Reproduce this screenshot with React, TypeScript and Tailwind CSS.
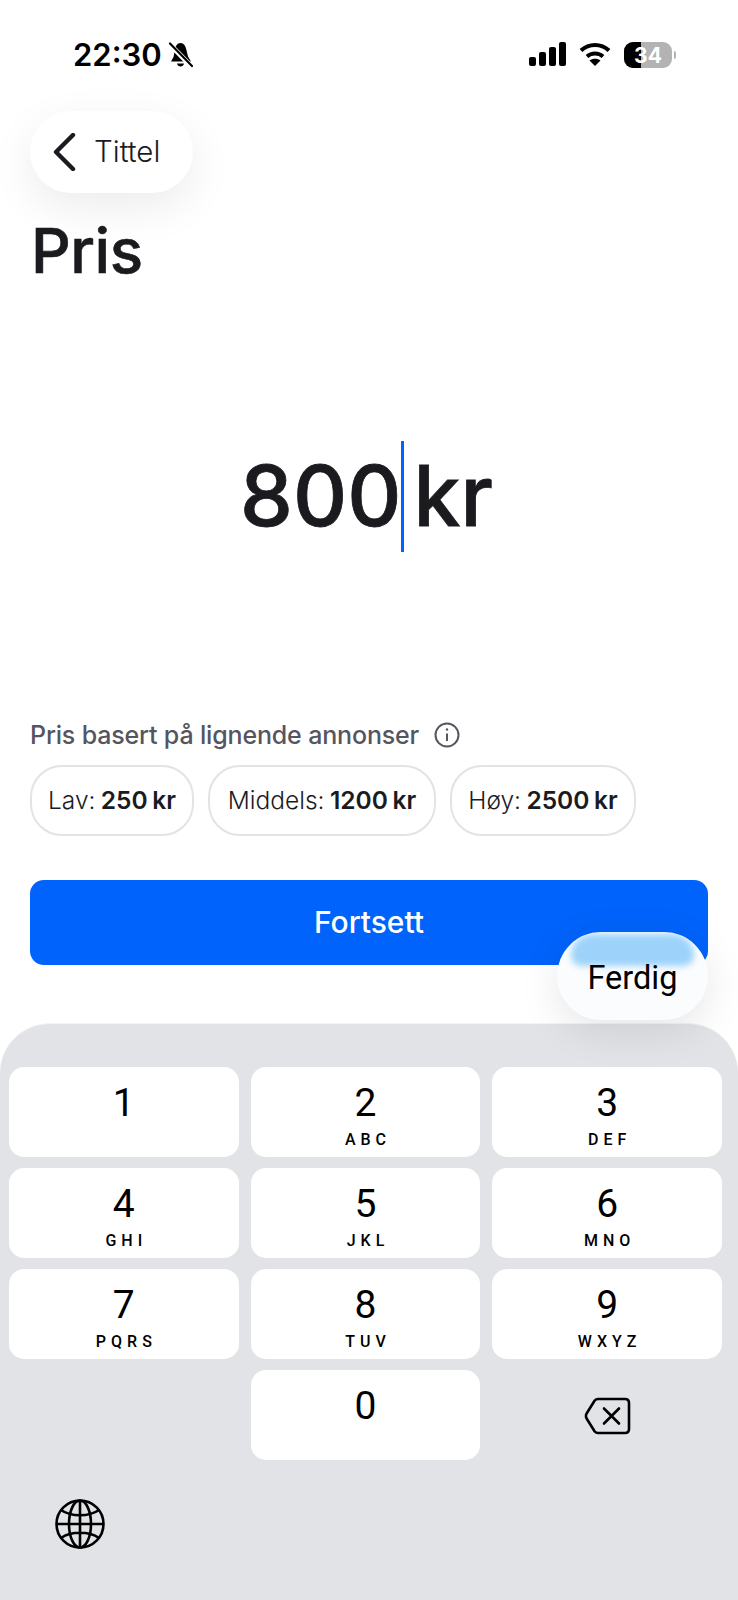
const rows = [
  [["1", ""], ["2", "ABC"], ["3", "DEF"]],
  [["4", "GHI"], ["5", "JKL"], ["6", "MNO"]],
  [["7", "PQRS"], ["8", "TUV"], ["9", "WXYZ"]],
];

function Key({ digit, letters }: { digit: string; letters: string }) {
  return (
    <div className="h-[90px] rounded-[15px] bg-white flex flex-col items-center pt-[13px] text-black">
      <span className="text-[39px] leading-[46px] font-normal">{digit}</span>
      <span className="text-[16px] leading-[18px] font-medium tracking-[5px] mt-[5px] pl-[5px]">{letters}</span>
    </div>
  );
}

function SignalIcon() {
  return (
    <svg width="37" height="24" viewBox="0 0 37 24" fill="#000">
      <rect x="0" y="15" width="7" height="9" rx="2" />
      <rect x="10" y="10" width="7" height="14" rx="2" />
      <rect x="20" y="5" width="7" height="19" rx="2" />
      <rect x="30" y="0" width="7" height="24" rx="2" />
    </svg>
  );
}

function WifiIcon() {
  return (
    <svg width="32" height="24" viewBox="0 0 32 24" fill="none" stroke="#000" strokeWidth="4">
      <path d="M2 8.5C10 1 22 1 30 8.5" />
      <path d="M8 14.5C12.5 10.5 19.5 10.5 24 14.5" />
      <path d="M16 24L10.5 18.5C13.5 16 18.5 16 21.5 18.5Z" fill="#000" stroke="none" />
    </svg>
  );
}

function BellOffIcon() {
  return (
    <svg width="25" height="27" viewBox="0 0 25 27">
      <path d="M12.5 1C16 1 17.5 4 18.3 7.5L20 14.5L23 19.5H3L5.5 15L7 7.5C7.6 4 9 1 12.5 1Z" fill="#000" />
      <path d="M9 21.5H16C15.6 25.5 9.4 25.5 9 21.5Z" fill="#000" />
      <path d="M1 1.5L24 25" stroke="#fff" strokeWidth="5" />
      <path d="M2 1.5L24 24" stroke="#000" strokeWidth="2.2" strokeLinecap="round" />
    </svg>
  );
}

function GlobeIcon() {
  return (
    <svg width="50" height="50" viewBox="0 0 50 50" fill="none" stroke="#000" strokeWidth="2.6">
      <circle cx="25" cy="25" r="23.5" />
      <ellipse cx="25" cy="25" rx="11" ry="23.5" />
      <path d="M25 1.5V48.5M1.5 25H48.5M6 11C16 18 34 18 44 11M6 39C16 32 34 32 44 39" />
    </svg>
  );
}

function BackspaceIcon() {
  return (
    <svg width="47" height="38" viewBox="0 0 47 38" fill="none" stroke="#000" strokeWidth="2.6" strokeLinecap="round" strokeLinejoin="round">
      <path d="M14 2H41C43.5 2 45 3.5 45 6V32C45 34.5 43.5 36 41 36H14C12.6 36 11.6 35.5 10.7 34.5L2.6 21.5C1.8 20 1.8 18 2.6 16.5L10.7 3.5C11.6 2.5 12.6 2 14 2Z" />
      <path d="M20 11.5L35 26.5M35 11.5L20 26.5" />
    </svg>
  );
}

export default function App() {
  return (
    <div className="relative w-[738px] h-[1600px] bg-white overflow-hidden font-['Inter',sans-serif] text-[#1b1b1f] flex flex-col">
      {/* status bar */}
      <div className="h-[111px] shrink-0 flex justify-between pt-[37px] pl-[73px] pr-[62px]">
        <div className="flex items-start gap-[6px] h-[36px]">
          <span className="text-[31px] leading-[36px] font-semibold text-black">22:30</span>
          <span className="mt-[5px]"><BellOffIcon /></span>
        </div>
        <div className="flex items-start gap-[13px] pt-[5px]">
          <SignalIcon />
          <WifiIcon />
          <div className="flex items-center gap-[2px]">
            <div className="relative w-[48px] h-[26px] rounded-[9px] bg-[#b3b3b3] overflow-hidden flex items-center justify-center">
              <div className="absolute left-0 top-0 bottom-0 w-[17px] bg-black" />
              <span className="relative text-[21px] leading-none font-bold text-white">34</span>
            </div>
            <div className="w-[2px] h-[8px] rounded-r-full bg-[#b3b3b3]" />
          </div>
        </div>
      </div>

      <div className="pl-[30px]">
        <div className="w-[163px] h-[82px] rounded-[41px] bg-white shadow-[0_14px_44px_rgba(0,0,0,0.08)] flex items-center pl-[22px] gap-[16px]">
          <svg width="26" height="38" viewBox="0 0 26 38" fill="none" stroke="#1b1b1f" strokeWidth="4.4" strokeLinecap="round" strokeLinejoin="round">
            <path d="M21 2L4 19L21 36" />
          </svg>
          <span className="text-[29.5px] leading-none font-light">Tittel</span>
        </div>
      </div>

      <h1 className="pl-[31px] mt-[20px] text-[62px] leading-[76px] font-medium tracking-[-0.5px] [-webkit-text-stroke:0.6px_#1b1b1f]">Pris</h1>

      {/* amount */}
      <div className="mt-[151px] h-[112px] flex items-center justify-center pr-[5px]">
        <span className="text-[84px] leading-none font-medium [-webkit-text-stroke:0.8px_#1b1b1f]">800</span>
        <div className="w-[3px] h-[111px] bg-[#0063fb] mr-[9px] shrink-0" />
        <span className="text-[84px] leading-none font-medium [-webkit-text-stroke:0.8px_#1b1b1f]">kr</span>
      </div>

      <div className="mt-[167px] pl-[30px] flex items-center gap-[15px] h-[32px] text-[#55555f]">
        <span className="text-[25px] leading-[32px] font-medium tracking-[-0.16px]">Pris basert på lignende annonser</span>
        <svg width="26" height="26" viewBox="0 0 26 26" fill="none" stroke="#55555f" strokeWidth="2">
          <circle cx="13" cy="13" r="11.5" />
          <path d="M13 11.5V19" />
          <circle cx="13" cy="7.5" r="1.2" fill="#55555f" stroke="none" />
        </svg>
      </div>

      <div className="mt-[14px] ml-[30px] flex gap-[14px] text-[24.5px] leading-none text-[#1b1b1f] [word-spacing:-1.5px]">
        <div className="h-[71px] w-[164px] rounded-[32px] border-2 border-[#e3e3e6] flex items-center justify-center font-light whitespace-nowrap">
          <span>Lav: <b className="font-semibold">250 kr</b></span>
        </div>
        <div className="h-[71px] w-[228px] rounded-[32px] border-2 border-[#e3e3e6] flex items-center justify-center font-light whitespace-nowrap">
          <span>Middels: <b className="font-semibold">1200 kr</b></span>
        </div>
        <div className="h-[71px] w-[186px] rounded-[32px] border-2 border-[#e3e3e6] flex items-center justify-center font-light whitespace-nowrap">
          <span>Høy: <b className="font-semibold">2500 kr</b></span>
        </div>
      </div>

      <div className="mt-[44px] mx-[30px] h-[85px] rounded-[14px] bg-[#0063fb] flex items-center justify-center text-white text-[30px] font-medium">
        Fortsett
      </div>

      {/* keyboard */}
      <div className="mt-[58px] flex-1 rounded-t-[50px] bg-[#e1e3e6] border-t border-[#f4f4f6] pl-[9px] pr-[16px] pt-[43px] font-['Roboto',sans-serif] flex flex-col gap-[11px]">
        {rows.map((row, i) => (
          <div key={i} className="grid grid-cols-3 gap-[12px]">
            {row.map(([d, l]) => <Key key={d} digit={d} letters={l} />)}
          </div>
        ))}
        <div className="grid grid-cols-3 gap-[12px]">
          <div />
          <Key digit="0" letters="" />
          <div className="flex items-center justify-center pt-[2px]">
            <BackspaceIcon />
          </div>
        </div>
        <div className="pl-[46px] pt-[28px]">
          <GlobeIcon />
        </div>
      </div>

      {/* Ferdig pill over the button */}
      <div className="absolute left-[557px] top-[932px] w-[151px] h-[88px] rounded-[44px] bg-[#fbfcfd] shadow-[0_10px_40px_rgba(0,0,0,0.1)] overflow-hidden flex items-end justify-center pb-[24px]">
        <div className="absolute left-[14px] right-[14px] top-[2px] h-[32px] rounded-b-[14px] rounded-t-[30px] bg-[#9dd3fb] blur-[3px]" />
        <span className="relative text-[32.5px] leading-[36px] font-['Roboto',sans-serif] text-black">Ferdig</span>
      </div>
    </div>
  );
}
